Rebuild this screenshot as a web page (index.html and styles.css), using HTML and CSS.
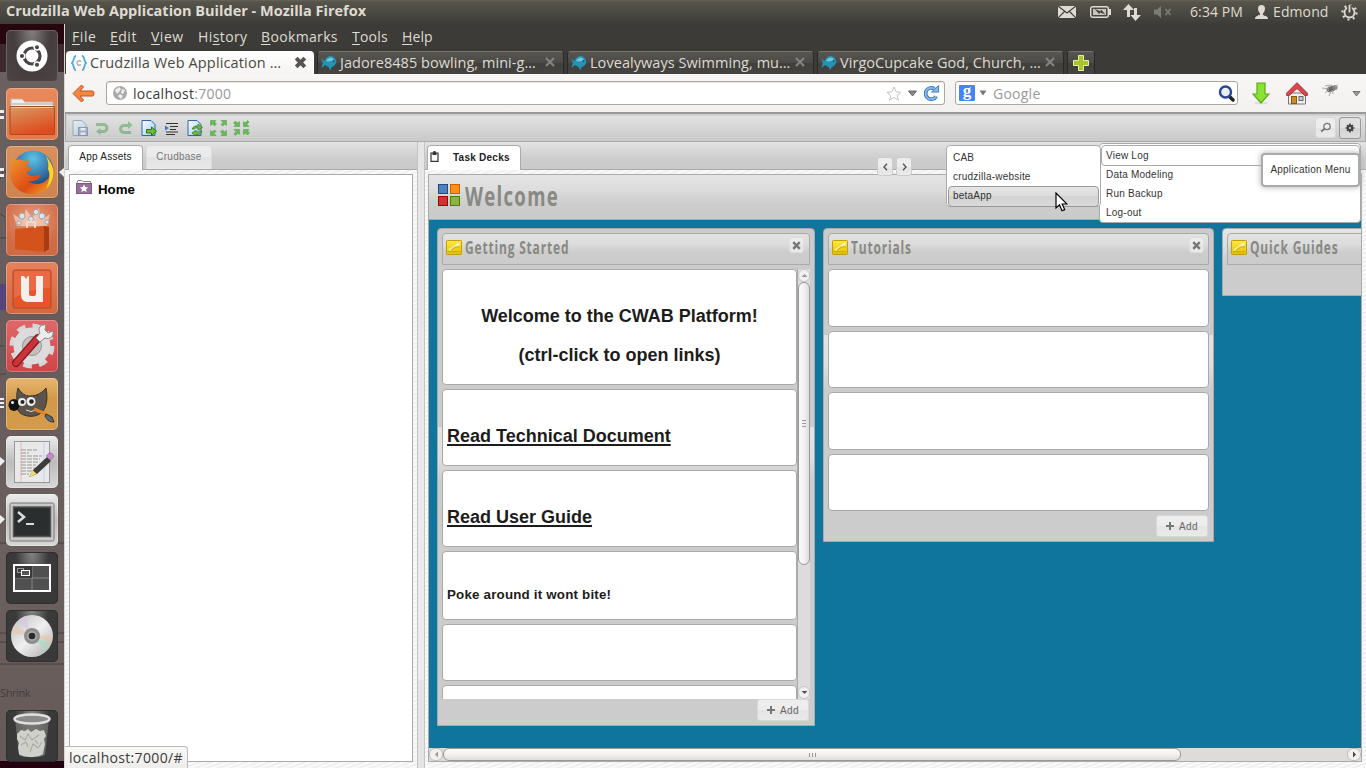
FILE: index.html
```html
<!DOCTYPE html>
<html lang="en">
<head>
<meta charset="utf-8">
<title>Crudzilla Web Application Builder</title>
<link rel="stylesheet" href="styles.css">
</head>
<body>
<svg class="defs" width="0" height="0">
  <defs>
    <linearGradient id="org" x2="0" y2="1"><stop offset="0" stop-color="#fbb070"/><stop offset="1" stop-color="#e2501c"/></linearGradient>
    <linearGradient id="fold" x2=".4" y2="1"><stop offset="0" stop-color="#d99a62"/><stop offset="1" stop-color="#de4d20"/></linearGradient>
    <radialGradient id="globe" cx=".5" cy=".2" r=".8"><stop offset="0" stop-color="#5cc3e8"/><stop offset="1" stop-color="#12306e"/></radialGradient>
    <linearGradient id="fox" x2="1" y2="1"><stop offset="0" stop-color="#f29a2e"/><stop offset=".6" stop-color="#dd4c14"/><stop offset="1" stop-color="#f3b42c"/></linearGradient>
    <linearGradient id="silver" x2="1" y2="1"><stop offset="0" stop-color="#bdbdbd"/><stop offset=".5" stop-color="#efefef"/><stop offset="1" stop-color="#a9a9a9"/></linearGradient>
    <linearGradient id="page" x2="1" y2="1"><stop offset="0" stop-color="#fff"/><stop offset="1" stop-color="#9cc8f0"/></linearGradient>
    <linearGradient id="gold" x2="0" y2="1"><stop offset="0" stop-color="#ffe845"/><stop offset="1" stop-color="#e3c000"/></linearGradient>
    <symbol id="fish" viewBox="0 0 16 16"><path d="M0 3.500l3.500 2.500C5 2.500 7 1 10 1c3.500 0 5 4 5.500 6-1.500 3.500-3 5-5 5l-1 3.500-2-3.500L4 10 .5 13 1.800 7.500z" fill="#2593b5"/><path d="M5 6c2-4 6-5 8-1-2 1-5 2-8 1z" fill="#6cc6dc"/><circle cx="12.500" cy="6" r=".9" fill="#14566b"/></symbol>
    <symbol id="tabx" viewBox="0 0 12 12"><path d="M2 2l8 8M10 2l-8 8" stroke="#85837e" stroke-width="2.200"/></symbol>
    <symbol id="note" viewBox="0 0 16 15"><rect x=".5" y=".5" width="15" height="14" rx=".8" fill="url(#gold)" stroke="#c2a000"/><path d="M2.500 9.500L12 3h2l-1 2.500-5 1-4 4z" fill="#fffbe0" stroke="#f4e27a" stroke-width=".7"/><path d="M5 10l5-3h4" stroke="#c9a400" fill="none" stroke-width=".8"/><path d="M2 11.800h12" stroke="#c9a800"/></symbol>
    <symbol id="cross" viewBox="0 0 9 9"><path d="M1.200 1.200l6.600 6.600M7.800 1.200L1.200 7.800" stroke="#777" stroke-width="2.400"/></symbol>
  </defs>
</svg>

<header class="panel">
  <span class="panel-title">Crudzilla Web Application Builder - Mozilla Firefox</span>
  <div class="indicators">
    <svg class="i-mail" width="18" height="12" viewBox="0 0 18 12"><rect width="18" height="12" fill="#dfdbd2"/><path d="M0 0l9 7 9-7M0 12l6.500-6.500M18 12l-6.500-6.500" fill="none" stroke="#3f3e39" stroke-width="1.200"/></svg>
    <svg class="i-bat" width="21" height="12" viewBox="0 0 21 12"><rect x=".7" y=".7" width="17.600" height="10.600" rx="2" fill="none" stroke="#dfdbd2" stroke-width="1.400"/><rect x="3" y="3" width="13" height="6" fill="#c9c5bc"/><rect x="19" y="3" width="2" height="6" fill="#dfdbd2"/><path d="M4.500 3l6 2.200.5-1.700 4.500 5-5.500-2-.6 1.800z" fill="#45433d"/></svg>
    <svg class="i-net" width="18" height="17" viewBox="0 0 18 17"><path d="M5.500 0L11 6H7v7H4V6H0zM12.500 17L7.500 11H11V4h3v7h4z" fill="#dfdbd2"/></svg>
    <svg class="i-vol" width="18" height="12" viewBox="0 0 18 12"><path d="M0 3.500h3L7 0v12L3 8.500H0z" fill="#7d7b75"/><path d="M11.500 3l5 6M16.500 3l-5 6" stroke="#7d7b75" stroke-width="1.700"/></svg>
    <span class="clock">6:34 PM</span>
    <svg class="i-user" width="13" height="14" viewBox="0 0 13 14"><path d="M3 3.500C3 1 4.500 0 6.500 0S10 1 10 3.500 8.500 8 8 8.500s0 1.500 1 2 4 .5 4 3.500H0c0-3 3-3 4-3.500s1.500-1.500 1-2S3 6 3 3.500z" fill="#dfdbd2"/></svg>
    <span class="user">Edmond</span>
    <svg class="i-gear" width="17" height="17" viewBox="0 0 17 17"><circle cx="8.500" cy="8.500" r="5" fill="none" stroke="#dfdbd2" stroke-width="1.800"/><circle cx="8.500" cy="8.500" r="7" fill="none" stroke="#dfdbd2" stroke-width="2.200" stroke-dasharray="2 3.500"/><path d="M8.500 1v8" stroke="#45443e" stroke-width="4.500"/><path d="M8.500 1v7.500" stroke="#dfdbd2" stroke-width="1.800"/></svg>
  </div>
</header>

<div class="desktop">
  <aside class="launcher">
    <div class="tile t-dash"><svg width="52" height="52" viewBox="0 0 52 52"><circle cx="26" cy="26" r="15.500" fill="#fff"/><circle cx="26" cy="26" r="8" fill="none" stroke="#4a4646" stroke-width="3.200"/><g stroke="#fff" stroke-width="1.500" fill="#4a4646"><circle cx="16" cy="26" r="2.800"/><circle cx="31" cy="17.300" r="2.800"/><circle cx="31" cy="34.700" r="2.800"/></g></svg></div>
    <div class="tile t-orange"><svg width="52" height="52" viewBox="0 0 52 52"><path d="M5 21V11h11l3 3h28v8z" fill="#eee" stroke="#c9b2a4"/><path d="M6 16h41" stroke="#aaa"/><rect x="4" y="18.500" width="44.500" height="28" rx="1" fill="url(#fold)" stroke="#a64c20"/><path d="M5 19.500h42" stroke="#f7c39b"/></svg></div>
    <div class="tile t-fox"><svg width="52" height="52" viewBox="0 0 52 52"><circle cx="27" cy="25" r="20.500" fill="url(#globe)"/><path d="M7 10c1 2 2 3 3 4 3-1 6 0 9 1 2-1 4-1 5 0-2 1-3 3-3 5l5 2c0 2-3 3-5 4 0 2 3 4 6 4 3 0 5-2 8-1-2 5-8 7-13 6 6 5 17 4 21-4 2-5 2-12-2-18 5 5 8 12 7 18-3 12-12 17-22 17C12 48 4 38 4 26 4 20 6 15 7 10z" fill="url(#fox)"/><path d="M40 10c5 6 9 13 7 21-1 5-4 9-7 12 3-7 5-14 2-20 1-4 0-9-2-13z" fill="#f9d52e"/></svg></div>
    <div class="tile t-soft"><svg width="52" height="52" viewBox="0 0 52 52"><path d="M11 22L7 10 17 16 20 5l6 9 7-10 2 12 9-6-3 12z" fill="#fff" opacity=".45"/><g fill="#dce4e8" stroke="#8b9aa5" stroke-width=".7"><circle cx="16" cy="12" r="3"/><circle cx="30" cy="8" r="2.600"/><circle cx="36" cy="12" r="3"/><circle cx="25" cy="15" r="2.500"/><circle cx="41" cy="18" r="2"/><circle cx="13" cy="19" r="2"/></g><path d="M9 25l29-3 5 1v22l-5 3-29-3z" fill="#d4531d"/><path d="M38 22l5 1v22l-5 3z" fill="#a93c12"/><path d="M21 24v-6h8v6" fill="none" stroke="#f6d9c0" stroke-width="2"/></svg></div>
    <div class="tile t-one"><svg width="52" height="52" viewBox="0 0 52 52"><rect x="7" y="8" width="38" height="38" rx="2" fill="#e7562a" stroke="#b54824"/><path d="M8 9h36v17c-12 0-25 4-36 10z" fill="#fff" opacity=".12"/><path d="M15 14h3l2 3 2-3h1v18q0 2 2 2h3q2 0 2-2V14h7v26H21q-6-1-6-7z" fill="#f3efed"/></svg></div>
    <div class="tile t-red"><svg width="52" height="52" viewBox="0 0 52 52"><circle cx="26" cy="26" r="20" fill="none" stroke="#d6d6d6" stroke-width="5" stroke-dasharray="8.500 7.200"/><circle cx="26" cy="26" r="14" fill="none" stroke="#dcdcdc" stroke-width="9"/><circle cx="26" cy="26" r="9.500" fill="#c5c0c0" stroke="#999"/><path d="M10 43L32 18" stroke="#8d191d" stroke-width="8" stroke-linecap="round"/><path d="M10 43L31 19" stroke="#c8343a" stroke-width="5.500" stroke-linecap="round"/><path d="M30 18L34 13C31 8 35 4 40 5l-1 5 3 3 5-2c1 5-3 9-8 7l-5 4z" fill="#ececec" stroke="#888"/></svg></div>
    <div class="tile t-gimp"><svg width="52" height="52" viewBox="0 0 52 52"><path d="M12 10c4 6 7 8 12 8 7 0 12-3 16-8 2 10 1 20-5 25-5 4-12 4-17 2-4-1-7-5-7-9 0-6-1-11 1-18z" fill="#5b544d" stroke="#37322d"/><ellipse cx="8" cy="27" rx="5.500" ry="6" fill="#111"/><circle cx="6.500" cy="24.500" r="1.500" fill="#eee"/><circle cx="16" cy="24" r="4" fill="#eee"/><circle cx="25" cy="23.500" r="4.500" fill="#eee"/><circle cx="16.500" cy="24" r="2" fill="#222"/><circle cx="25.500" cy="23.500" r="2.300" fill="#222"/><path d="M20 32q5 3 10 0" fill="none" stroke="#ddd"/><path d="M28 31l14 6" stroke="#e08424" stroke-width="3"/><path d="M40 36l6 3 2 5c-5 0-7-2-9-6z" fill="#567" stroke="#333"/></svg></div>
    <div class="tile t-light"><svg width="52" height="52" viewBox="0 0 52 52"><rect x="8.500" y="5.500" width="35" height="41" fill="#e9e9e9" stroke="#999"/><path d="M15 6v40" stroke="#eeb3b3"/><path d="M38 6v40" stroke="#c0cdec"/><path d="M15 14h16M15 17h8M15 20h21M15 23h19M15 26h17M15 29h15M15 32h14M15 35h12M15 38h8" stroke="#999" stroke-dasharray="5 1"/><path d="M27 34l14-13 4 4-14 13-8 3z" fill="#3c3c3c"/><path d="M23 41l3.500-7 4.500 4z" fill="#e9d86e"/><path d="M40 20l3-3q3-1 5 3l-3 4z" fill="#c48ac9" stroke="#875b8c" stroke-width=".5"/></svg></div>
    <div class="tile t-light"><svg width="52" height="52" viewBox="0 0 52 52"><rect x="4" y="9" width="44" height="38" rx="1.500" fill="#c9c9c7" stroke="#777"/><rect x="7.500" y="13" width="37" height="29.500" fill="#2b2e2f" stroke="#555" stroke-width="1.500"/><path d="M12 18l6 5-6 5" fill="none" stroke="#ddd" stroke-width="2.500"/><path d="M20 30h8" stroke="#ddd" stroke-width="2"/></svg></div>
    <div class="tile t-dark"><svg width="52" height="52" viewBox="0 0 52 52"><rect x="8" y="13" width="36" height="26" fill="#505050" stroke="#fff" stroke-width="2"/><path d="M26 14v24M9 26h34" stroke="#888"/><rect x="9" y="14" width="17" height="12" fill="#3a3a3a"/><rect x="11.500" y="16.500" width="6" height="4" fill="none" stroke="#999"/><rect x="15.500" y="18.500" width="8" height="5" fill="#555" stroke="#fff"/></svg></div>
    <div class="tile t-dark"><svg width="52" height="52" viewBox="0 0 52 52"><circle cx="26" cy="26" r="21" fill="url(#silver)"/><path d="M26 26L8 15l-3 8z" fill="#e8c6b4" opacity=".7"/><path d="M26 26L13 10l6-4z" fill="#d9c3ea" opacity=".6"/><path d="M26 26l18 8-4 7z" fill="#a9dcc0" opacity=".7"/><path d="M26 26l19-1v7z" fill="#edc5a6" opacity=".6"/><circle cx="26" cy="26" r="8" fill="#8d8d8d"/><circle cx="26" cy="26" r="5" fill="#aaa"/><circle cx="26" cy="26" r="3.300" fill="#2b2b2b"/></svg></div>
    <div class="shrink">Shrink</div>
    <div class="tile t-dark t-trash"><svg width="52" height="52" viewBox="0 0 52 52"><path d="M9 9h34l-4 36c-2 3-24 3-26 0z" fill="#8a8a88" opacity=".55"/><path d="M11 24l4-4 4 1 3-2 3 3 5-3 4 2 4-1 2 6-2 3 1 5-2 10c-4 4-20 4-24 0l-1-7 1-4-2-4z" fill="#d0d0cb"/><path d="M14 26l5 4 3-6 4 6 7-5M15 35l5-3 2 5M24 42l3-8 5 4 4-6M29 30l3 4" fill="none" stroke="#a9a9a4" stroke-width="1.100"/><ellipse cx="26" cy="9" rx="17.500" ry="4.500" fill="#8a8a88" stroke="#e0e0de" stroke-width="2.500"/></svg></div>
    <svg class="marks" width="64" height="744" viewBox="0 0 64 744"><g fill="none" stroke="#4a3f40" stroke-width="1"><path d="M0 155l4-10 2 4M0 322h4M0 214h32M0 350h6M0 519h64M0 609h64M0 618h64M0 640h64M0 190l5 3"/></g><path d="M0 260h6v26H0z" fill="#54467a"/><g fill="#eee"><path d="M0 86h4v3H0zM0 92h4v3H0zM0 144h4v3H0zM0 150h4v3H0zM0 374h4v2H0zM0 378h4v2H0zM0 382h4v2H0zM0 433l5 4-5 5zM0 491l5 4-5 5zM64 144l-5 4 5 5z"/></g></svg>
  </aside>

  <main class="browser">
    <nav class="menubar"><span><u>F</u>ile</span><span><u>E</u>dit</span><span><u>V</u>iew</span><span>Hi<u>s</u>tory</span><span><u>B</u>ookmarks</span><span><u>T</u>ools</span><span><u>H</u>elp</span></nav>
    <div class="tabs">
      <div class="tab active"><svg width="16" height="16" viewBox="0 0 16 16"><path d="M5 .8C2 .8 3.500 6.500.8 8c2.700 1.500 1.200 7.200 4.200 7.200M11 .8c3 0 1.500 5.700 4.200 7.200-2.700 1.500-1.200 7.200-4.200 7.200" fill="none" stroke="#4eaadb" stroke-width="1.800"/><path d="M10 6.500C8 5 6 6 6 8s2 3 4 1.500" fill="none" stroke="#aaa" stroke-width="1.300"/></svg><span class="tt tt1">Crudzilla Web Application …</span><svg class="tx" width="13" height="13" viewBox="0 0 12 12"><path d="M2 2l8 8M10 2l-8 8" stroke="#555450" stroke-width="3.600"/></svg></div>
      <div class="tab"><svg width="16" height="16"><use href="#fish"/></svg><span class="tt">Jadore8485 bowling, mini-g…</span><svg class="tx" width="12" height="12"><use href="#tabx"/></svg></div>
      <div class="tab"><svg width="16" height="16"><use href="#fish"/></svg><span class="tt">Lovealyways Swimming, mu…</span><svg class="tx" width="12" height="12"><use href="#tabx"/></svg></div>
      <div class="tab"><svg width="16" height="16"><use href="#fish"/></svg><span class="tt">VirgoCupcake God, Church, …</span><svg class="tx" width="12" height="12"><use href="#tabx"/></svg></div>
      <div class="tab new"><svg width="16" height="16" viewBox="0 0 16 16"><path d="M5.500.5h5v5h5v5h-5v5h-5v-5h-5v-5h5z" fill="#a9c42e" stroke="#e6f0a8"/></svg></div>
    </div>
    <div class="navbar">
      <svg class="back" width="23" height="19" viewBox="0 0 23 19"><path d="M9.500 1L1 9.500 9.500 18l2-2-3.500-4h12.500q1.500 0 1.500-2.500T20.500 7H8l3.500-4z" fill="#f08844" stroke="#c4521a" stroke-linejoin="round"/></svg>
      <div class="url">
        <svg width="14" height="14" viewBox="0 0 14 14"><circle cx="7" cy="7" r="7" fill="#aaa"/><path d="M2 4l4-3 2 2-2 3-2 2zM9 3l3 1-2 4-2-1zM5 10l2-2 3 2-2 3z" fill="#eee"/></svg>
        <span class="host">localhost<i>:7000</i></span>
        <svg class="star" width="16" height="15" viewBox="0 0 16 15"><path d="M8 1l2 4.800 5 .5-3.800 3.300L12.400 14 8 11.500 3.600 14l1.200-4.400L1 6.300l5-.5z" fill="#fff" stroke="#c4c4c4"/></svg>
        <svg class="ud" width="9" height="7" viewBox="0 0 9 7"><path d="M.5 1h8l-4 5z" fill="#888" stroke="#666"/></svg>
        <svg class="reload" width="17" height="17" viewBox="0 0 18 18"><path d="M14 12A6 6 0 1 1 12 4" fill="none" stroke="#3f7ab8" stroke-width="4"/><path d="M14 12A6 6 0 1 1 12 4" fill="none" stroke="#86b8e8" stroke-width="2"/><path d="M9 7.500h7.500V.5z" fill="#86b8e8" stroke="#3f7ab8"/></svg>
      </div>
      <div class="search">
        <span class="g">g</span>
        <svg class="gd" width="8" height="6" viewBox="0 0 8 6"><path d="M.5.500h7L4 5.500z" fill="#777"/></svg>
        <span class="ph">Google</span>
        <svg width="17" height="17" viewBox="0 0 17 17"><path d="M12 12l3 3" stroke="#222" stroke-width="3.500" stroke-linecap="round"/><circle cx="7.500" cy="7" r="5.500" fill="#e9effa" stroke="#2c4590" stroke-width="2.400"/><path d="M4.500 6a3 3 0 0 1 3-2" stroke="#fff" fill="none"/></svg>
      </div>
      <svg class="dl" width="18" height="23" viewBox="0 0 18 23"><ellipse cx="9" cy="21" rx="7" ry="1.500" fill="#ddd"/><path d="M5 1h8v11h4L9 21 1 12h4z" fill="#8ae234" stroke="#5cab14" stroke-width="1.200"/></svg>
      <svg class="home" width="22" height="23" viewBox="0 0 22 23"><path d="M2.500 11h17v11h-17z" fill="#f0efed" stroke="#777"/><path d="M11 .7L.7 11v2.500h2.600L11 6.500l7.700 7h2.600V11z" fill="#d8474c" stroke="#a8383c"/><rect x="5.500" y="14.500" width="5" height="7" fill="#c98a28" stroke="#8a5a10"/><rect x="13" y="14.500" width="4" height="4" fill="#bcd" stroke="#666"/></svg>
      <svg class="bug" width="17" height="14" viewBox="0 0 17 14"><ellipse cx="9" cy="6" rx="4.500" ry="3" transform="rotate(-18 9 6)" fill="#666"/><circle cx="13" cy="4.500" r="2.500" fill="#888"/><path d="M0 5l7 1M3 10l4-3M7 13l2-5M11 11l-1-4M16 2l-3 2M8 2L3 3" stroke="#aaa" stroke-width="1"/><path d="M6 4l4-2" stroke="#bbb" stroke-width="1.500"/></svg>
      <svg class="more" width="9" height="6" viewBox="0 0 9 6"><path d="M1 .5h7L4.500 5z" fill="#999" stroke="#777"/></svg>
    </div>

    <div class="page">
      <div class="toolbar">
        <svg class="fade" width="16" height="16" viewBox="0 0 16 16"><path d="M1 .5h9l4 4v11H1z" fill="url(#page)" stroke="#3f78b8"/><rect x="6.500" y="7.500" width="9" height="8" fill="#5d86c8" stroke="#2c509a"/><path d="M8.500 8h5v2.500h-5zM8.500 12.500h5V15h-5z" fill="#fff"/></svg>
        <svg class="fade" width="15" height="14" viewBox="0 0 15 14"><path d="M1 3.500h7.500a3.500 3.500 0 0 1 0 7H4" fill="none" stroke="#3c9a40" stroke-width="3"/><path d="M5.500 7v7L1 10.500z" fill="#3c9a40"/></svg>
        <svg class="fade" width="15" height="14" viewBox="0 0 15 14"><path d="M13 11.500H6a3.500 3.500 0 0 1 0-7h5" fill="none" stroke="#3c9a40" stroke-width="3"/><path d="M10 0v8l4.500-4z" fill="#3c9a40"/></svg>
        <svg width="16" height="16" viewBox="0 0 16 16"><path d="M1 .5h9l4 4v11H1z" fill="url(#page)" stroke="#2867b5"/><path d="M5.500 9.500h5V7l5 4.200-5 4.300v-2.500h-5z" fill="#71bd3a" stroke="#2c7612"/></svg>
        <svg width="14" height="13" viewBox="0 0 14 13"><path d="M1 1.500h12M5 4.500h8M5 7.500h6M1 10h12M1 12.500h9" stroke="#333" stroke-width="1.100"/><path d="M0 3.500L4 6 0 8.500z" fill="#3b77d6"/></svg>
        <svg width="16" height="16" viewBox="0 0 16 16"><path d="M1 .5h9l4 4v11H1z" fill="url(#page)" stroke="#2867b5"/><path d="M5 9q2-4 6-3V4l4.500 3.500L11 10V8Q8 7 7.500 9zM15 11q-1 4-6 3.500V16l-4-3 4-2.700v1.700q3 0 3.500-1z" fill="#71bd3a" stroke="#2c7612" stroke-width=".7"/></svg>
        <svg width="17" height="16" viewBox="0 0 17 16"><g fill="#63bd54" stroke="#4a9a3e" stroke-width=".5"><path d="M.5.500H6L4.500 2 6.500 4 4.500 6l-2-2L.5 5.500z"/><path d="M16.500.500v5L15 4l-2.500 2L11 4.500 13 2.500 11 .5zM.5 15.500v-5L2 12l2.500-2L6 11.500 4 13.500l2 2zM16.500 15.500H11l1.500-1.500-2-2 2-2 2 2 2-1.500z"/></g></svg>
        <svg width="17" height="16" viewBox="0 0 17 16"><g fill="#63bd54" stroke="#4a9a3e" stroke-width=".5"><path d="M6.500 6.500H1L2.500 5l-2-2 2-2 2 2 2-1.500zM10.500 6.500v-5L12 3l2.500-2.500L16 2l-2 2.500 2 2zM6.500 9.500v5L5 13l-2.500 2.500L1 14l2-2.500-2-2zM10.500 9.500H16L14.500 11l2 2-2 2-2-2-2 1.500z"/></g></svg>
        <div class="btn find"><svg width="12" height="12" viewBox="0 0 12 12"><circle cx="7" cy="4.500" r="3.200" fill="none" stroke="#777" stroke-width="1.300"/><path d="M4.700 6.700L1 9.500" stroke="#777" stroke-width="1.800"/></svg></div>
        <div class="btn gear"><svg width="10" height="10" viewBox="0 0 10 10"><path d="M5 .5v9M.5 5h9M2 2l6 6M8 2L2 8" stroke="#444" stroke-width="1.700"/><circle cx="5" cy="5" r="3.200" fill="#444"/><circle cx="5" cy="5" r="1" fill="#ddd"/></svg></div>
      </div>
      <div class="panes">
        <section class="left">
          <div class="strip"><div class="ptab on">App Assets</div><div class="ptab off">Crudbase</div></div>
          <div class="tree"><svg width="16" height="14" viewBox="0 0 16 14"><path d="M1 3.500V2.500l1-2h4l1 1h7.500v3" fill="#f6f6f6" stroke="#888"/><rect x=".5" y="3.500" width="15" height="10" fill="#94709a" stroke="#7c5c82"/><path d="M8 4.500l1.300 2.600 2.900.3-2.200 1.900.7 2.700L8 10.700 5.300 12l.7-2.700-2.200-1.900 2.900-.3z" fill="#fff"/></svg><b>Home</b></div>
        </section>
        <div class="splitter"></div>
        <section class="right">
          <div class="strip"><div class="ptab on decks"><svg width="9" height="11" viewBox="0 0 9 11"><path d="M1 2h7v8.300H1z" fill="#fff" stroke="#333" stroke-width="1.200"/><path d="M2.500 1.500h4V4h-4zM3.500 0h2v2h-2z" fill="#333"/></svg>Task Decks</div></div>
          <div class="deck">
            <div class="deck-head"><svg width="23" height="23" viewBox="0 0 23 23"><rect x=".5" y=".5" width="9" height="9" fill="#4e81bd" stroke="#204a87"/><rect x="12.500" y=".5" width="9" height="9" fill="#fb9017" stroke="#ce5c00"/><rect x=".5" y="12.500" width="9" height="9" fill="#d23337" stroke="#a40000"/><rect x="12.500" y="12.500" width="9" height="9" fill="#8bb441" stroke="#4e7a06"/></svg><h1>Welcome</h1></div>
            <div class="board">
              <article class="col c1">
                <div class="col-head"><svg width="16" height="15"><use href="#note"/></svg><h2 class="h-gs">Getting Started</h2><div class="btn x"><svg width="9" height="9"><use href="#cross"/></svg></div></div>
                <div class="col-body">
                  <div class="cards">
                    <div class="card k1"><p>Welcome to the CWAB Platform!</p><p>(ctrl-click to open links)</p></div>
                    <div class="card k2"><a>Read Technical Document</a></div>
                    <div class="card k2 k3"><a>Read User Guide</a></div>
                    <div class="card k4">Poke around it wont bite!</div>
                    <div class="card k5"></div>
                    <div class="card k5"></div>
                  </div>
                  <div class="vbar"><div class="va"><svg width="7" height="5" viewBox="0 0 7 5"><path d="M.5 4h6L3.500 1z" fill="#999"/></svg></div><div class="vthumb"><i></i><i></i><i></i></div><div class="vtrack"></div><div class="va"><svg width="7" height="5" viewBox="0 0 7 5"><path d="M.5 1h6L3.500 4z" fill="#555"/></svg></div></div>
                </div>
                <div class="col-foot"><div class="btn add"><svg width="8" height="8" viewBox="0 0 8 8"><path d="M4 0v8M0 4h8" stroke="#777" stroke-width="2"/></svg>Add</div></div>
              </article>
              <article class="col c2">
                <div class="col-head"><svg width="16" height="15"><use href="#note"/></svg><h2 class="h-tu">Tutorials</h2><div class="btn x"><svg width="9" height="9"><use href="#cross"/></svg></div></div>
                <div class="cards">
                  <div class="card k6"></div><div class="card k6"></div><div class="card k6"></div><div class="card k6"></div>
                </div>
                <div class="col-foot"><div class="btn add"><svg width="8" height="8" viewBox="0 0 8 8"><path d="M4 0v8M0 4h8" stroke="#777" stroke-width="2"/></svg>Add</div></div>
              </article>
              <article class="col c3">
                <div class="col-head"><svg width="16" height="15"><use href="#note"/></svg><h2 class="h-qg">Quick Guides</h2></div>
              </article>
            </div>
            <div class="hbar"><div class="ha"><svg width="5" height="7" viewBox="0 0 5 7"><path d="M4 .5v6L1 3.500z" fill="#999"/></svg></div><div class="hthumb"><i></i><i></i><i></i></div><div class="htrack"></div><div class="ha"><svg width="5" height="7" viewBox="0 0 5 7"><path d="M1 .5v6l3-3z" fill="#444"/></svg></div></div>
          </div>
        </section>
      </div>
    </div>
  </main>
</div>

<div class="pager"><div class="btn"><svg width="5" height="8" viewBox="0 0 5 8"><path d="M4 .8L1 4l3 3.200" fill="none" stroke="#555" stroke-width="1.400"/></svg></div><div class="btn"><svg width="5" height="8" viewBox="0 0 5 8"><path d="M1 .8L4 4 1 7.200" fill="none" stroke="#555" stroke-width="1.400"/></svg></div></div>
<div class="menu m-main"><div class="mi boxed">View Log</div><div class="mi">Data Modeling</div><div class="mi">Run Backup</div><div class="mi">Log-out</div></div>
<div class="menu m-apps"><div class="mi">CAB</div><div class="mi">crudzilla-website</div><div class="mi hot">betaApp</div></div>
<div class="tip">Application Menu</div>
<svg class="cursor" width="13" height="20" viewBox="0 0 13 20"><path d="M1 1v15l3.500-3.200 2.500 6 2.700-1.200-2.500-5.600H12z" fill="#fff" stroke="#000" stroke-width="1.200"/></svg>
<div class="status">localhost:7000/#</div>
</body>
</html>
```
FILE: styles.css
```css
* { box-sizing: border-box; }
body { margin: 0; width: 1366px; height: 768px; overflow: hidden; position: relative; display: flex; flex-direction: column; font-family: "Open Sans", "Noto Sans", sans-serif; font-size: 14px; color: #3c3b37; }
svg { display: block; flex: none; }
.defs { position: absolute; }
span, h1, h2, b, a, p { white-space: nowrap; }

/* top panel */
.panel { flex: none; height: 24px; display: flex; align-items: center; justify-content: space-between; background: linear-gradient(#65635a, #56544a 2px, #3d3c38); color: #dfdbd2; padding-left: 6px; }
.panel-title { font-weight: 700; font-size: 14.500px; line-height: 22px; margin-top: -2px; }
.indicators { display: flex; align-items: center; height: 24px; padding-right: 8px; line-height: 24px; }
.i-bat { margin-left: 14px; }
.i-net { margin-left: 12px; }
.i-vol { margin-left: 13px; }
.clock { margin-left: 18px; width: 53px; letter-spacing: .1px; }
.i-user { margin-left: 12px; }
.user { margin-left: 5px; width: 56px; letter-spacing: .1px; }
.i-gear { margin-left: 12px; }

.desktop { flex: 1; min-height: 0; display: flex; }

/* launcher */
.launcher { position: relative; flex: none; width: 65px; padding: 6px 0 6px 6px; display: flex; flex-direction: column; gap: 6px; border-right: 1px solid #d9d5d3; overflow: hidden; background: linear-gradient(#27070f 0, #27070f 20px, #3c2a2e 20px, #3c2a2e 48px, #6b6060 48px, #675b5c 320px, #6c605f 560px, #665a59 737px, #24000f 737px); }
.tile { flex: none; position: relative; z-index: 1; width: 52px; height: 52px; border-radius: 5px; overflow: hidden; box-shadow: inset 0 0 0 1px rgba(255,255,255,.28), 0 0 1px rgba(0,0,0,.4); }
.t-dash { background: radial-gradient(ellipse at 50% 0, #858080 0, #443c3d 50%, #4c4445 100%); box-shadow: inset 0 0 0 1px #6a6263; }
.t-orange { background: linear-gradient(#e98a5c, #e07a4a); }
.t-fox { background: linear-gradient(#d9905c, #cf8450); }
.t-soft { background: radial-gradient(circle at 50% 30%, #e79a78, #cf6a44 70%); }
.t-one { background: linear-gradient(#e6825c, #d06840); }
.t-red { background: linear-gradient(#e0686a, #cf4548); }
.t-gimp { background: linear-gradient(#e8b672, #d29a48 40%, #d49c4a); }
.t-light { background: linear-gradient(#ececec, #bcbcbc 50%, #d8d8d8); }
.t-dark { background: radial-gradient(ellipse at 50% 0, #858585 0, #3a3a3a 45%, #383838 100%); box-shadow: inset 0 0 0 1px #302d2d; }
.shrink { position: relative; height: 20px; margin: 15px 0 0 -6px; line-height: 20px; font-size: 11px; letter-spacing: -.4px; color: #453c3c; }
.t-trash { margin-top: auto; }
.marks { position: absolute; left: 0; top: 0; }

/* browser chrome */
.browser { flex: 1; min-width: 0; display: flex; flex-direction: column; background: #3c3b37; }
.menubar { flex: none; height: 26px; display: flex; color: #dfdbd2; padding-left: 7px; line-height: 25px; }
.menubar u { text-underline-offset: 2px; }
.menubar span:nth-child(1) { width: 38px; letter-spacing: .6px; }
.menubar span:nth-child(2) { width: 41px; letter-spacing: .5px; }
.menubar span:nth-child(3) { width: 47px; letter-spacing: .5px; }
.menubar span:nth-child(4) { width: 63px; letter-spacing: .4px; }
.menubar span:nth-child(5) { width: 91px; letter-spacing: .35px; }
.menubar span:nth-child(6) { width: 50px; letter-spacing: .2px; }
.menubar span:nth-child(7) { letter-spacing: .1px; }
.tabs { flex: none; height: 24px; display: flex; gap: 3px; padding: 1px 0 0 1px; }
.tab { width: 247px; height: 23px; border-radius: 4px 4px 0 0; display: flex; align-items: center; padding: 0 7px 0 3px; color: #dfdbd2; background: linear-gradient(#565550, #4b4a46 50%, #403f3b 50%, #454440); border: 1px solid #2a2926; border-top-color: #76746c; border-bottom: 0; }
.tab.active { width: 248px; background: linear-gradient(#fff, #f5f4f2); color: #4a4945; border-color: #fff; padding: 0 6px 0 4px; }
.tab.new { width: 28px; padding: 0 5px; }
.tt { flex: 1; width: 0; margin-left: 3px; line-height: 22px; font-size: 14.500px; letter-spacing: .05px; }
.tt1 { letter-spacing: .14px; }
.tx { margin-left: auto; }
.tab .tx { margin-top: -2px; }
.navbar { flex: none; height: 38px; display: flex; align-items: center; background: linear-gradient(#f7f6f5, #f2f1f0); padding-left: 7px; }
.url { margin-left: 11px; width: 839px; height: 24px; border: 1px solid #aaa79f; border-radius: 3px; background: #fff; display: flex; align-items: center; padding-left: 6px; box-shadow: inset 0 1px 0 #e8e6e3; }
.host { margin-left: 6px; letter-spacing: .28px; color: #3c3b37; }
.host i { font-style: normal; color: #999; }
.star { margin-left: auto; }
.ud { margin-left: 6px; }
.reload { margin: 0 4px 0 6px; }
.search { margin-left: 10px; width: 283px; height: 24px; border: 1px solid #aaa79f; border-radius: 3px; background: #fff; display: flex; align-items: center; padding: 0 2px 0 3px; }
.g { width: 16px; height: 16px; background: #4285f4; border-radius: 1px; color: #fff; font: 700 17px/11px "Liberation Serif", serif; text-align: center; }
.gd { margin-left: 4px; }
.ph { margin-left: 6px; flex: 1; color: #999; letter-spacing: .25px; }
.dl { margin-left: 14px; }
.home { margin-left: 16px; }
.bug { margin: -6px 0 0 14px; }
.more { margin: 2px 0 0 13px; }

/* application */
.page { flex: 1; min-height: 0; display: flex; flex-direction: column; font-family: "Liberation Sans", Arial, sans-serif; font-size: 10px; color: #333; background: repeating-linear-gradient(160deg, #f0f0f0 0 2px, #fafafa 2px 4px); }
.toolbar { flex: none; height: 30px; border: 1px solid #aaa; border-top: 2px solid #999; border-bottom-color: #aaa; background: linear-gradient(#e4e4e4, #d9d9d9 40%, #c9c9c9); box-shadow: inset 1px 2px 0 #d0d0d0; display: flex; align-items: center; padding: 1px 4px 0 6px; }
.toolbar svg { margin-right: 7px; }
.toolbar .fade { opacity: .45; }
.toolbar svg:nth-child(2), .toolbar svg:nth-child(3) { margin-right: 8px; }
.toolbar svg:nth-child(4) { margin-right: 8px; }
.toolbar svg:nth-child(5) { margin-right: 8px; }
.toolbar svg:nth-child(7) { margin-right: 6px; }
.btn { flex: none; display: flex; align-items: center; justify-content: center; border: 1px solid #d8d8d8; border-radius: 3px; background: linear-gradient(#ededed 50%, #e4e4e4 50%, #eaeaea); color: #666; }
.toolbar .btn svg { margin: 0; }
.find { width: 21px; height: 21px; margin-left: auto; margin-top: -1px; }
.gear { width: 22px; height: 22px; margin: -1px 0 0 3px; border-color: #999; background: linear-gradient(#e0e0e0 50%, #d4d4d4 50%, #dcdcdc); }
.panes { flex: 1; min-height: 0; display: flex; }
.left { flex: none; width: 353px; display: flex; flex-direction: column; border-right: 1px solid #c4c4c4; }
.strip { flex: none; height: 28px; border-bottom: 1px solid #aaa; background: linear-gradient(#e3e3e3, #cecece 60%, #c9c9c9); display: flex; align-items: flex-end; gap: 3px; padding-left: 3px; }
.left .strip { width: 352px; }
.ptab { height: 24px; line-height: 22px; border-radius: 4px 4px 0 0; text-align: center; letter-spacing: .25px; }
.on { height: 25px; margin-bottom: -1px; width: 75px; background: #fff; border: 1px solid #aaa; border-bottom: 0; color: #222; }
.off { width: 66px; background: linear-gradient(#ebebeb 50%, #e2e2e2 50%, #e9e9e9); border: 1px solid #dcdcdc; border-bottom: 0; color: #777; }
.left .on { margin-left: 0; }
.decks { width: 94px; display: flex; align-items: center; padding-left: 2px; font-weight: 700; gap: 14px; }
.decks svg { margin-top: -3px; }
.tree { flex: 1; margin: 4px 5px 6px 4px; width: 344px; border: 1px solid #aaa; background: #fff; padding: 7px 6px; display: flex; align-items: flex-start; gap: 6px; font-size: 13.300px; color: #000; }
.tree svg { margin-top: -2px; }
.tree b { line-height: 15px; }
.splitter { flex: none; width: 6px; background: linear-gradient(#e6e6e6 0, #e6e6e6 20%, #e9e9e9 45%, #ededed 86%, #e4e4e4 86%); }
.right { flex: 1; min-width: 0; display: flex; flex-direction: column; border-left: 1px solid #c4c4c4; }
.right .strip { padding-left: 2px; }
.deck { flex: 1; min-height: 0; margin: 4px 4px 6px 3px; border: 1px solid #aaa; display: flex; flex-direction: column; overflow: hidden; background: #0f759c; }
.deck-head { flex: none; height: 45px; border-bottom: 1px solid #aaa; background: linear-gradient(#e4e4e4, #dedede 30%, #cdcdcd 65%, #cacaca); display: flex; align-items: flex-start; padding: 9px 0 0 9px; }
h1, h2 { margin: 0; color: #888983; font-family: "Open Sans", "Noto Sans", sans-serif; transform-origin: 0 50%; font-weight: 700; }
h1 { font-size: 26px; line-height: 26px; margin: -1px 0 0 4px; transform: scaleX(.715); letter-spacing: 1.800px; }
h2 { font-size: 17.500px; line-height: 18px; margin: -2px 0 0 3px; transform: scaleX(.685); letter-spacing: 1.200px; }
.board { flex: 1; min-height: 0; display: flex; gap: 8px; align-items: flex-start; padding: 8px 0 0 8px; }
.col { flex: none; border: 1px solid #aaa; border-radius: 4px 4px 0 0; padding: 4px; background: linear-gradient(#cbcbcb 0 106px, #e3e3e3 106px, #dfdfdf 136px, #ccc 160px); }
.c1 { width: 378px; height: 498px; background: linear-gradient(#cbcbcb 0 198px, #e3e3e3 198px, #dfdfdf 228px, #ccc 252px); }
.c2 { width: 391px; height: 314px; }
.c3 { width: 391px; height: 68px; background: linear-gradient(#e5e5e5, #dfdfdf 15px, #ccc 36px); }
.col-head { height: 32px; border: 1px solid #aaa; border-radius: 4px 4px 0 0; background: linear-gradient(#e3e3e3, #dcdcdc 35%, #cdcdcd 60%, #cbcbcb); display: flex; align-items: flex-start; padding: 6px 4px 0 3px; }
.c1 .h-gs { width: 104px; }
.x { width: 15px; height: 16px; margin: -3px 0 0 auto; border-color: #ddd; }
.c1 .col-head { padding-right: 5px; }
.col-body { margin-top: 4px; height: 430px; display: flex; overflow: hidden; }
.cards { flex: 1; min-width: 0; display: flex; flex-direction: column; gap: 4px; }
.c2 .cards { margin-top: 4px; gap: 4px; }
.card { flex: none; background: #fff; border: 1px solid #a9a9a9; border-radius: 4px; color: #1c1c1c; font-weight: 700; font-size: 18px; padding-left: 4px; }
.k1 { height: 116px; text-align: center; padding: 36px 0 0; }
.k1 p { margin: 0 0 19px; line-height: 20px; }
.k2 { height: 77px; padding-top: 36px; line-height: 20px; }
.k2 a { text-decoration: underline; text-decoration-thickness: 2px; text-underline-offset: 2px; }
.k4 { height: 69px; font-size: 13.330px; letter-spacing: .2px; padding-top: 34px; line-height: 18px; }
.k5 { height: 57px; }
.k6 { height: 57.500px; }
.vbar { flex: none; width: 13px; display: flex; flex-direction: column; border-left: 1px solid #aaa; background: #dedcda; }
.va { flex: none; height: 13px; display: flex; align-items: center; justify-content: center; background: #f2f1f0; border: 1px solid #c8c6c3; border-radius: 6px; }
.vthumb { flex: none; height: 283px; border: 1px solid #999; border-radius: 6px; background: linear-gradient(90deg, #fbfbfa, #f2f1f0 50%, #dfddda); display: flex; flex-direction: column; gap: 2px; align-items: center; justify-content: center; }
.vthumb i { width: 4px; height: 1px; background: #999; }
.vtrack { flex: 1; }
.col-foot { display: flex; justify-content: flex-end; padding: 0 1px 0 0; }
.c2 .col-foot { padding-top: 4px; }
.add { width: 52px; height: 22px; gap: 5px; letter-spacing: .4px; }
.hbar { flex: none; height: 13px; display: flex; background: #dedcda; }
.ha { flex: none; width: 14px; display: flex; align-items: center; justify-content: center; background: #f2f1f0; border: 1px solid #c0beba; border-radius: 6px; }
.hthumb { flex: none; width: 738px; border: 1px solid #999; border-radius: 6px; background: linear-gradient(#fbfbfa, #f2f1f0 50%, #dfddda); display: flex; gap: 2px; align-items: center; justify-content: center; }
.hthumb i { width: 1px; height: 4px; background: #999; }
.htrack { flex: 1; }

/* overlays */
.pager { position: absolute; left: 877px; top: 157px; display: flex; gap: 3px; }
.pager .btn { width: 16px; height: 19px; border-color: #ccc; }
.menu, .tip { position: absolute; background: #fff; font: 10px "Liberation Sans", Arial, sans-serif; color: #333; border: 1px solid #aaa; border-radius: 4px; letter-spacing: .22px; }
.mi { height: 19px; line-height: 19px; padding-left: 5px; }
.m-main { left: 1099px; top: 143px; width: 262px; height: 80px; padding: 1px 1px 0; }
.boxed { border: 1px solid #aaa; border-radius: 4px; height: 21px; padding-left: 4px; margin-bottom: -1px; width: 259px; }
.m-apps { left: 946px; top: 145px; width: 155px; height: 62px; padding: 2px 1px; }
.hot { border: 1px solid #999; border-radius: 4px; height: 21px; line-height: 18px; padding-left: 4px; background: linear-gradient(#e6e6e6, #dcdcdc 50%, #d2d2d2 50%, #dadada); }
.tip { left: 1261px; top: 153px; width: 99px; height: 34px; border: 2px solid #aaa; line-height: 30px; text-align: center; box-shadow: 0 0 6px #aaa; }
.cursor { position: absolute; left: 1055px; top: 192px; }
.status { position: absolute; left: 65px; top: 746px; width: 123px; height: 22px; background: linear-gradient(#f8f8f7, #eeedeb); border: 1px solid #bbb; border-left: 0; border-bottom: 0; border-radius: 0 4px 0 0; padding-left: 4px; line-height: 22px; letter-spacing: .33px; }
```
